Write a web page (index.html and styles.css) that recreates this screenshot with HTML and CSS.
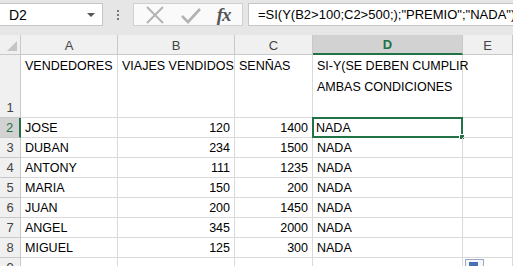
FILE: index.html
```html
<!DOCTYPE html>
<html lang="es">

<head>
    <meta charset="UTF-8">
    <meta name="viewport" content="width=device-width, initial-scale=1.0">
    <title>Hoja</title>
    <link rel="stylesheet" href="styles.css">
</head>

<body>
    <div class="toolbar">
        <div class="name-box">
            <span>D2</span>
            <span class="arrow"></span>
        </div>
        <div class="grip">
            <i></i><i></i><i></i>
        </div>
        <div class="buttons">
            <svg width="20" height="20" viewBox="0 0 20 20">
                <path d="M2 2 L18 18 M18 2 L2 18" stroke="#b3b3b3" stroke-width="2" fill="none" />
            </svg>
            <svg width="22" height="20" viewBox="0 0 22 20">
                <path d="M2 11 L8 17 L20 4" stroke="#b3b3b3" stroke-width="2.6" fill="none" />
            </svg>
            <span class="fx">fx</span>
        </div>
        <div class="formula">=SI(Y(B2&gt;100;C2&gt;500;);"PREMIO";"NADA")</div>
    </div>

    <div class="sheet">
        <div class="hd corner"></div>
        <div class="hd col">A</div>
        <div class="hd col">B</div>
        <div class="hd col">C</div>
        <div class="hd col active">D</div>
        <div class="hd col">E</div>

        <div class="hd row tall">1</div>
        <div class="cell top">VENDEDORES</div>
        <div class="cell top">VIAJES VENDIDOS</div>
        <div class="cell top">SENÑAS</div>
        <div class="cell top wrap">SI-Y(SE DEBEN CUMPLIR<br>AMBAS CONDICIONES</div>
        <div class="cell"></div>

        <div class="hd row active">2</div>
        <div class="cell">JOSE</div>
        <div class="cell num">120</div>
        <div class="cell num">1400</div>
        <div class="cell selected">NADA<span class="handle"></span></div>
        <div class="cell"></div>

        <div class="hd row">3</div>
        <div class="cell">DUBAN</div>
        <div class="cell num">234</div>
        <div class="cell num">1500</div>
        <div class="cell">NADA</div>
        <div class="cell"></div>

        <div class="hd row">4</div>
        <div class="cell">ANTONY</div>
        <div class="cell num">111</div>
        <div class="cell num">1235</div>
        <div class="cell">NADA</div>
        <div class="cell"></div>

        <div class="hd row">5</div>
        <div class="cell">MARIA</div>
        <div class="cell num">150</div>
        <div class="cell num">200</div>
        <div class="cell">NADA</div>
        <div class="cell"></div>

        <div class="hd row">6</div>
        <div class="cell">JUAN</div>
        <div class="cell num">200</div>
        <div class="cell num">1450</div>
        <div class="cell">NADA</div>
        <div class="cell"></div>

        <div class="hd row">7</div>
        <div class="cell">ANGEL</div>
        <div class="cell num">345</div>
        <div class="cell num">2000</div>
        <div class="cell">NADA</div>
        <div class="cell"></div>

        <div class="hd row">8</div>
        <div class="cell">MIGUEL</div>
        <div class="cell num">125</div>
        <div class="cell num">300</div>
        <div class="cell">NADA</div>
        <div class="cell"></div>

        <div class="hd row">9</div>
        <div class="cell"></div>
        <div class="cell"></div>
        <div class="cell"></div>
        <div class="cell"></div>
        <div class="cell"><span class="paste"><i></i></span></div>
    </div>
</body>

</html>
```
FILE: styles.css
```css
* {
    box-sizing: border-box;
}

body {
    margin: 0;
    width: 513px;
    height: 266px;
    overflow: hidden;
    background-color: #ffffff;
    font-family: "Liberation Sans", Arial, sans-serif;
    color: #000;
}

/* barra de formulas */
.toolbar {
    display: flex;
    align-items: flex-start;
    height: 35px;
    padding-top: 3px;
    background-color: #e6e6e6;
}

.name-box {
    width: 103px;
    height: 23px;
    display: flex;
    align-items: center;
    justify-content: space-between;
    padding: 0 7px 0 9px;
    background-color: #fff;
    border: 1px solid #c6c6c6;
    border-left: none;
    font-size: 14px;
}

.arrow {
    width: 0;
    height: 0;
    border-left: 4px solid transparent;
    border-right: 4px solid transparent;
    border-top: 4px solid #555;
}

.grip {
    width: 30px;
    height: 23px;
    display: flex;
    flex-direction: column;
    align-items: center;
    justify-content: center;
    gap: 2px;
}

.grip i {
    width: 2px;
    height: 2px;
    background-color: #777;
}

.buttons {
    width: 110px;
    height: 23px;
    display: flex;
    align-items: center;
    justify-content: space-around;
    padding: 0 4px;
    background-color: #fafafa;
    border: 1px solid #d0d0d0;
}

.fx {
    font-family: "Liberation Serif", "Times New Roman", serif;
    font-style: italic;
    font-weight: bold;
    font-size: 19px;
    color: #555;
    letter-spacing: -1px;
}

.formula {
    flex: 1;
    height: 23px;
    margin-left: 5px;
    padding-left: 9px;
    background-color: #fff;
    border: 1px solid #c6c6c6;
    border-right: none;
    font-size: 13px;
    line-height: 21px;
    white-space: nowrap;
    overflow: hidden;
}

/* hoja */
.sheet {
    display: grid;
    grid-template-columns: 21px 97px 117px 78px 150px 50px;
    grid-template-rows: 20px 63px repeat(8, 20px);
    font-size: 12px;
}

.hd {
    background-color: #f0f0f0;
    color: #444;
    display: flex;
    align-items: center;
    justify-content: center;
    border-right: 1px solid #c9c9c9;
    border-bottom: 1px solid #c9c9c9;
    font-size: 13px;
}

.corner {
    position: relative;
}

.corner::after {
    content: "";
    position: absolute;
    right: 3px;
    bottom: 3px;
    border-left: 10px solid transparent;
    border-bottom: 10px solid #c4c4c4;
}

.col {
    padding-top: 1px;
}

.col.active {
    background-color: #d2d2d2;
    color: #217346;
    font-weight: bold;
    border-bottom: 2px solid #217346;
}

.row.tall {
    align-items: flex-end;
    padding-bottom: 2px;
}

.row.active {
    background-color: #d2d2d2;
    color: #217346;
    border-right: 2px solid #217346;
}

.cell {
    position: relative;
    display: flex;
    align-items: center;
    padding: 1px 4px 0 4px;
    border-right: 1px solid #dadada;
    border-bottom: 1px solid #dadada;
    white-space: nowrap;
    font-size: 12.5px;
}

.cell.top {
    align-items: flex-start;
    padding-top: 4px;
}

.cell.wrap {
    display: block;
    line-height: 21px;
    padding-top: 1px;
}

.cell.num {
    justify-content: flex-end;
}

.cell.selected {
    border: 2px solid #217346;
    padding-left: 2px;
    padding-top: 0;
    margin: -1px 0 0 -1px;
}

.handle {
    position: absolute;
    right: -4px;
    bottom: -4px;
    width: 6px;
    height: 6px;
    background-color: #217346;
    border: 1px solid #fff;
}

.paste {
    position: absolute;
    left: 2px;
    top: 1px;
    width: 19px;
    height: 10px;
    padding: 2px 3px;
    border: 1px solid #9aa8c2;
    background-color: #f4f6fa;
}

.paste i {
    display: block;
    width: 9px;
    height: 4px;
    background-color: #4a6fb5;
}
```
